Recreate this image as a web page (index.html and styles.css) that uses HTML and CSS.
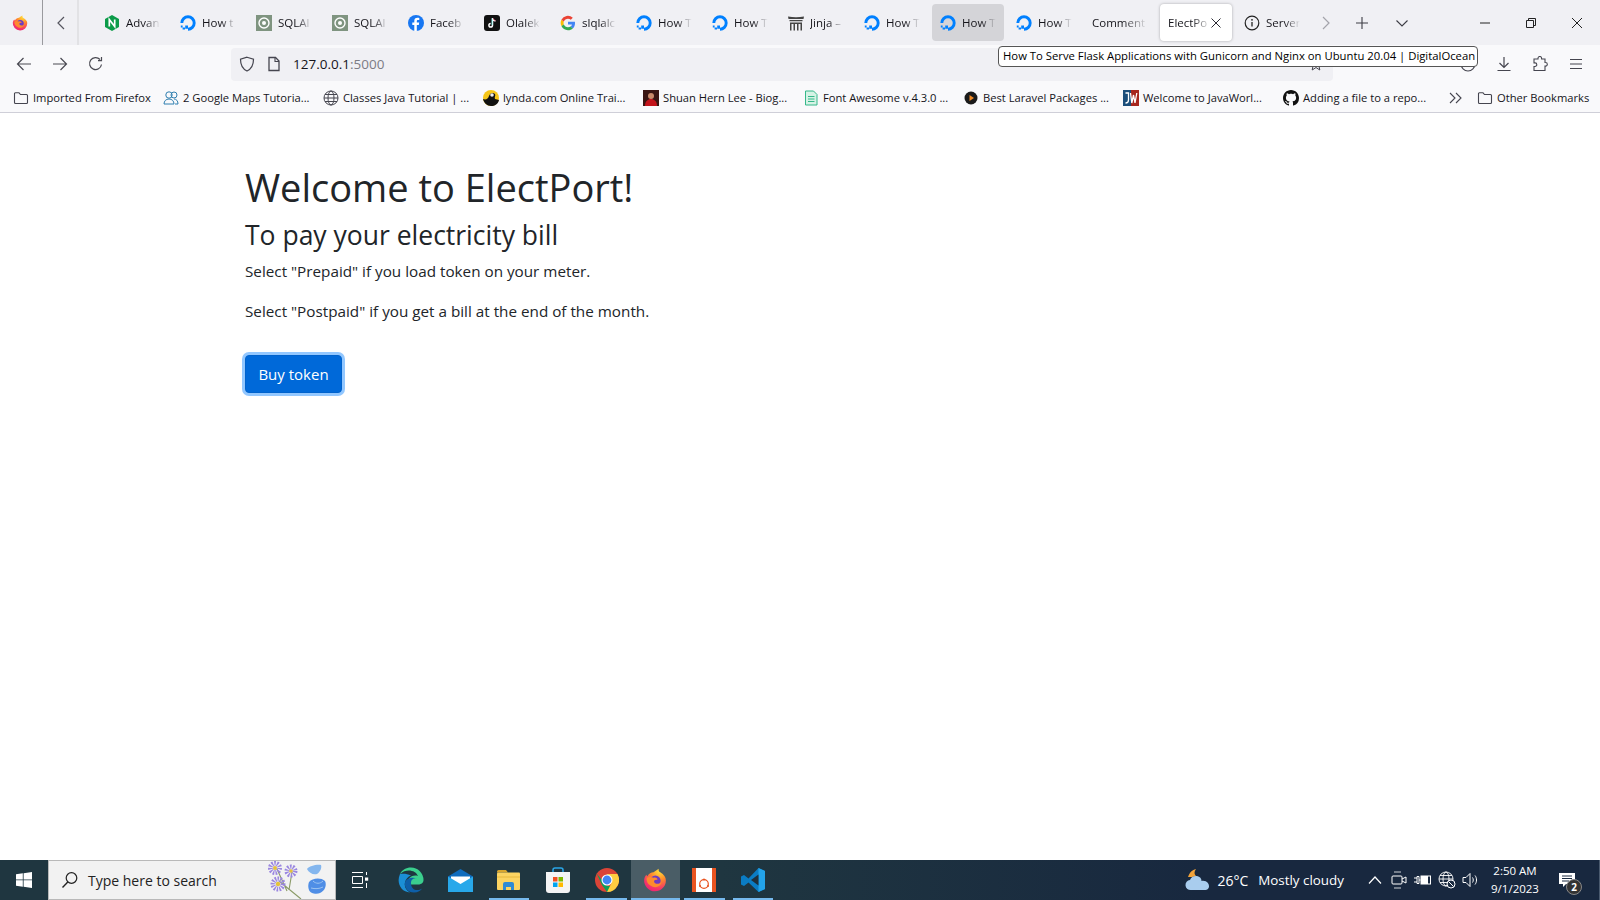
FILE: index.html
```html
<!DOCTYPE html>
<html lang="en">
<head>
    <meta charset="UTF-8">
    <title>ElectPort</title>
    <link rel="stylesheet" href="styles.css">
</head>
<body>
    <svg class="defs" width="0" height="0">
        <defs>
            <symbol id="do" viewBox="0 0 16 16">
                <path d="M8 14.200a6.200 6.200 0 1 0-6.200-6.200" fill="none" stroke="#0080ff" stroke-width="2.900"/>
                <path d="M5.200 10.600H8v3.200H5.200zM2.600 12.400h2.400v2.200H2.600zM.8 10.600h1.800v1.800H.8z" fill="#0080ff"/>
            </symbol>
            <symbol id="sqla" viewBox="0 0 16 16">
                <rect width="16" height="16" fill="#7f9480"/>
                <circle cx="8" cy="8" r="5" fill="none" stroke="#fff" stroke-width="1.400"/>
                <circle cx="8" cy="8" r="2" fill="#fff"/>
            </symbol>
            <symbol id="folder" viewBox="0 0 16 16">
                <path d="M1.500 4V12.500a1 1 0 0 0 1 1h11a1 1 0 0 0 1-1V5.500a1 1 0 0 0-1-1H7.500L6 2.800H2.500a1 1 0 0 0-1 1.200z" fill="none" stroke="#45454f" stroke-width="1.100"/>
            </symbol>
            <radialGradient id="ffg" cx="0.7" cy="0.1" r="1">
                <stop offset="0" stop-color="#ffe03a"/>
                <stop offset="0.4" stop-color="#ff8a2b"/>
                <stop offset="0.8" stop-color="#f5336b"/>
                <stop offset="1" stop-color="#e8246f"/>
            </radialGradient>
            <symbol id="ff" viewBox="0 0 32 32">
                <path d="M16 31A14.600 14.600 0 0 1 1.600 15C2 12.500 3 10.500 4.500 9c.3 1 .8 1.600 1.400 2C7.500 7.500 11 5.500 14 5.500c2.500-1.600 4.400-3 7-4.500-.6 2.300 0 3.600 2 4.800C28 8.500 30.500 12.500 30.500 16.500A14.500 14.500 0 0 1 16 31z" fill="url(#ffg)"/>
                <circle cx="16.500" cy="17" r="7" fill="#6e3bc2"/>
                <path d="M5 13c3-1.500 6-1.500 9 0 3-1 6 1 5 3-3-1-5 1-4 3 2 3 7 3 10-1-1 6-7 9-12 7-5-2-9-6-8-12z" fill="#ff8a2d"/>
            </symbol>
        </defs>
    </svg>

    <div class="browser">
        <div class="tabbar">
            <div class="ff-btn"><svg width="16" height="16"><use href="#ff"/></svg></div>
            <div class="tab-scroll">
                <svg width="12" height="16" viewBox="0 0 12 16"><path d="M9 2 3 8l6 6" fill="none" stroke="#55555f" stroke-width="1.200"/></svg>
            </div>
            <div class="tabs">
                <div class="tab"><svg class="tab-icon" viewBox="0 0 16 16"><path d="M8 0 15 4v8l-7 4-7-4V4z" fill="#0c9b49"/><path d="M5.300 11.500v-7l5.400 7v-7" fill="none" stroke="#fff" stroke-width="1.700"/></svg><span class="tab-title">Advan</span></div>
                <div class="tab"><svg class="tab-icon"><use href="#do"/></svg><span class="tab-title">How t</span></div>
                <div class="tab"><svg class="tab-icon"><use href="#sqla"/></svg><span class="tab-title">SQLAl</span></div>
                <div class="tab"><svg class="tab-icon"><use href="#sqla"/></svg><span class="tab-title">SQLAl</span></div>
                <div class="tab"><svg class="tab-icon" viewBox="0 0 16 16"><circle cx="8" cy="8" r="8" fill="#1877f2"/><path d="M8.800 16V10h2l.4-2.400H8.800V6.300c0-.8.300-1.200 1.300-1.200h1.200V3c-.5-.1-1.200-.2-1.900-.2-2 0-3.100 1.200-3.100 3.200v1.600H4.300V10h2v6z" fill="#fff"/></svg><span class="tab-title">Faceb</span></div>
                <div class="tab"><svg class="tab-icon" viewBox="0 0 16 16"><rect width="16" height="16" rx="3" fill="#111"/><path d="M8.500 3v7.300a1.800 1.800 0 1 1-1.800-1.800M8.500 3c.2 1.700 1.200 2.800 3 3" fill="none" stroke="#fff" stroke-width="1.500"/><path d="M8 3.500v6.500" stroke="#25f4ee" stroke-width=".5"/><path d="M9.300 3.500c.3 1.200 1 2 2.200 2.300" fill="none" stroke="#fe2c55" stroke-width=".6"/></svg><span class="tab-title">Olalek</span></div>
                <div class="tab"><svg class="tab-icon" viewBox="0 0 16 16"><path d="M15 8.200c0-.6 0-1-.1-1.400H8v2.800h4a3.400 3.400 0 0 1-1.500 2.200l2.300 1.800c1.400-1.300 2.200-3.200 2.200-5.400z" fill="#4285f4"/><path d="M8 15.200c2 0 3.600-.6 4.800-1.800l-2.300-1.800c-.6.400-1.500.7-2.500.7-1.900 0-3.600-1.300-4.200-3L1.400 11.100a7.200 7.200 0 0 0 6.600 4.100z" fill="#34a853"/><path d="M3.800 9.300a4.300 4.300 0 0 1 0-2.700L1.400 4.800a7.200 7.200 0 0 0 0 6.300z" fill="#fbbc05"/><path d="M8 3.700c1.100 0 2 .4 2.800 1.100l2-2A7.200 7.200 0 0 0 1.400 4.800l2.400 1.800c.6-1.700 2.300-2.900 4.200-2.900z" fill="#ea4335"/></svg><span class="tab-title">slqlalc</span></div>
                <div class="tab"><svg class="tab-icon"><use href="#do"/></svg><span class="tab-title">How T</span></div>
                <div class="tab"><svg class="tab-icon"><use href="#do"/></svg><span class="tab-title">How T</span></div>
                <div class="tab"><svg class="tab-icon" viewBox="0 0 16 16"><path d="M0 1.500c5 1 11 1 16 0L15.500 4H.5zM1.500 5h13v1.300h-13zM2 7.500h12v8h-1.500V9h-2v6.500H9V9H7v6.500H5.500V9h-2v6.500H2z" fill="#444"/></svg><span class="tab-title">Jinja –</span></div>
                <div class="tab"><svg class="tab-icon"><use href="#do"/></svg><span class="tab-title">How T</span></div>
                <div class="tab tab-hover"><svg class="tab-icon"><use href="#do"/></svg><span class="tab-title">How T</span></div>
                <div class="tab"><svg class="tab-icon"><use href="#do"/></svg><span class="tab-title">How T</span></div>
                <div class="tab"><span class="tab-title tab-noicon">Comment</span></div>
                <div class="tab tab-active">
                    <span class="tab-title tab-noicon">ElectPo</span>
                    <svg class="tab-close" width="10" height="10" viewBox="0 0 10 10"><path d="M.5.5l9 9M9.500.5l-9 9" stroke="#2b2a33" stroke-width="1"/></svg>
                </div>
                <div class="tab"><svg class="tab-icon" viewBox="0 0 16 16"><circle cx="8" cy="8" r="6.800" fill="none" stroke="#222" stroke-width="1.200"/><path d="M8 7v4.500" stroke="#222" stroke-width="1.300"/><circle cx="8" cy="4.800" r=".9" fill="#222"/></svg><span class="tab-title">Server</span></div>
            </div>
            <div class="tab-tools">
                <svg class="tool-next" width="12" height="16" viewBox="0 0 12 16"><path d="M3 2l6 6-6 6" fill="none" stroke="#a4a4ab" stroke-width="1.200"/></svg>
                <svg class="tool-plus" width="14" height="14" viewBox="0 0 14 14"><path d="M7 1v12M1 7h12" stroke="#3c3c44" stroke-width="1.100"/></svg>
                <svg class="tool-down" width="14" height="10" viewBox="0 0 14 10"><path d="M1.500 2.500 7 8l5.500-5.500" fill="none" stroke="#3c3c44" stroke-width="1.100"/></svg>
            </div>
            <div class="win-btns">
                <svg width="12" height="12" viewBox="0 0 12 12"><path d="M1 6h10" stroke="#222" stroke-width="1"/></svg>
                <svg width="12" height="12" viewBox="0 0 12 12"><path d="M1.500 3.500h7v7h-7zM3.500 3.500v-2h7v7h-2" fill="none" stroke="#222" stroke-width="1"/></svg>
                <svg width="12" height="12" viewBox="0 0 12 12"><path d="M1 1l10 10M11 1 1 11" stroke="#222" stroke-width="1"/></svg>
            </div>
        </div>

        <div class="navbar">
            <div class="nav-btns">
                <svg width="16" height="16" viewBox="0 0 16 16"><path d="M15 8H1.500M7.500 2 1.500 8l6 6" fill="none" stroke="#4a4a52" stroke-width="1.200"/></svg>
                <svg width="16" height="16" viewBox="0 0 16 16"><path d="M1 8h13.500M8.500 2l6 6-6 6" fill="none" stroke="#4a4a52" stroke-width="1.200"/></svg>
                <svg width="16" height="16" viewBox="0 0 16 16"><path d="M13.500 8.500A6 6 0 1 1 12 3.500M13.500 1v3.600H10" fill="none" stroke="#4a4a52" stroke-width="1.200"/></svg>
            </div>
            <div class="urlbar">
                <svg class="url-shield" width="16" height="16" viewBox="0 0 16 16"><path d="M8 1.200 14.500 3.300C14.500 9 12.500 13 8 15 3.500 13 1.500 9 1.500 3.300z" fill="none" stroke="#45454f" stroke-width="1.200"/></svg>
                <svg class="url-page" width="14" height="16" viewBox="0 0 14 16"><path d="M2 1.500h6.500L12 5v9.500H2z" fill="none" stroke="#45454f" stroke-width="1.300"/><path d="M8 1.500V5.500h4" fill="none" stroke="#45454f" stroke-width="1.100"/></svg>
                <span class="url-text">127.0.0.1<span class="url-port">:5000</span></span>
                <svg class="url-star" width="14" height="14" viewBox="0 0 14 14"><path d="M7 1l1.800 4H13L9.800 8l1 5L7 10.500 3.200 13l1-5L1 5h4.200z" fill="none" stroke="#45454f"/></svg>
            </div>
            <div class="nav-tools">
                <svg width="16" height="16" viewBox="0 0 16 16"><circle cx="8" cy="8" r="7" fill="none" stroke="#45454f" stroke-width="1.100"/></svg>
                <svg width="16" height="16" viewBox="0 0 16 16"><path d="M8 1v10M3.500 7 8 11.500 12.500 7M1.500 14.500h13" fill="none" stroke="#45454f" stroke-width="1.200"/></svg>
                <svg width="16" height="16" viewBox="0 0 16 16"><path d="M6 3.500V2.800a1.800 1.800 0 0 1 3.600 0v.7H13V7h.5a1.800 1.800 0 0 1 0 3.600H13v4.400H2V11h1a1.800 1.800 0 0 0 0-3.600H2V3.500z" fill="none" stroke="#45454f" stroke-width="1.100" transform="translate(0 -.5)"/></svg>
                <svg width="16" height="16" viewBox="0 0 16 16"><path d="M2 3.500h12M2 8h12M2 12.500h12" stroke="#45454f" stroke-width="1.200"/></svg>
            </div>
        </div>

        <div class="bookmarks">
            <div class="bm bm-first"><svg class="bm-icon"><use href="#folder"/></svg><span>Imported From Firefox</span></div>
            <div class="bm"><svg class="bm-icon" viewBox="0 0 16 16"><circle cx="6" cy="5" r="3.200" fill="none" stroke="#2f7fb0"/><circle cx="11" cy="5" r="3" fill="none" stroke="#2f7fb0"/><path d="M1 14c0-3 2-5 5-5s5 2 5 5zM11 9c2.500 0 4 2 4 5h-3" fill="none" stroke="#2f7fb0"/></svg><span>2 Google Maps Tutoria...</span></div>
            <div class="bm"><svg class="bm-icon" viewBox="0 0 16 16"><g fill="none" stroke="#45454f" stroke-width="1"><circle cx="8" cy="8" r="7"/><ellipse cx="8" cy="8" rx="3" ry="7"/><path d="M1 8h14M2 4.500h12M2 11.500h12"/></g></svg><span>Classes Java Tutorial | ...</span></div>
            <div class="bm"><svg class="bm-icon" viewBox="0 0 16 16"><circle cx="8" cy="8" r="8" fill="#f5c518"/><path d="M0 9c3 1 5 0 6-3 1-3 4-4 6-2 1 2-1 3 0 5l4 1c-1 4-4 6-8 6s-7-3-8-7z" fill="#111"/><circle cx="9" cy="5" r="1.800" fill="#eee"/></svg><span>lynda.com Online Trai...</span></div>
            <div class="bm"><svg class="bm-icon" viewBox="0 0 16 16"><rect width="16" height="16" fill="#3a1512"/><circle cx="8" cy="6" r="3" fill="#c98a6a"/><path d="M2 16c0-5 3-7 6-7s6 2 6 7z" fill="#c3141b"/></svg><span>Shuan Hern Lee - Biog...</span></div>
            <div class="bm"><svg class="bm-icon" viewBox="0 0 16 16"><path d="M2.500 1h8L14 4.500V15H2.500z" fill="#d5f2e5" stroke="#35b88a"/><path d="M5 6.500h6.500M5 9h6.500M5 11.500h6.500" stroke="#35b88a"/></svg><span>Font Awesome v.4.3.0 ...</span></div>
            <div class="bm"><svg class="bm-icon" viewBox="0 0 16 16"><circle cx="8" cy="8" r="6.500" fill="#1a1a1a"/><path d="M6.500 5v6l4.500-3z" fill="#f08a24"/></svg><span>Best Laravel Packages ...</span></div>
            <div class="bm"><svg class="bm-icon" viewBox="0 0 16 16"><rect width="16" height="16" fill="#1b4e7a"/><rect x="8" width="8" height="16" fill="#a7261e"/><path d="M2.500 3h3v7c0 2-1 3-3 3M7.500 3l1.300 10 1.700-8 1.500 8L13.800 3" fill="none" stroke="#fff" stroke-width="1.300"/></svg><span>Welcome to JavaWorl...</span></div>
            <div class="bm"><svg class="bm-icon" viewBox="0 0 16 16"><path d="M8 0C3.580 0 0 3.580 0 8c0 3.540 2.290 6.530 5.470 7.590.4.070.55-.17.550-.38 0-.19-.01-.82-.01-1.490-2.010.37-2.530-.49-2.690-.94-.09-.23-.48-.94-.82-1.130-.28-.15-.68-.52-.01-.53.63-.01 1.080.58 1.230.82.720 1.210 1.870.87 2.330.66.070-.52.280-.87.510-1.070-1.780-.2-3.640-.89-3.640-3.950 0-.87.310-1.590.820-2.150-.08-.2-.36-1.020.080-2.120 0 0 .67-.21 2.200.82.640-.18 1.320-.27 2-.27s1.360.09 2 .27c1.530-1.040 2.200-.82 2.200-.82.440 1.100.16 1.920.08 2.120.51.560.82 1.270.82 2.150 0 3.070-1.870 3.750-3.650 3.950.29.250.54.730.54 1.480 0 1.070-.01 1.930-.01 2.200 0 .21.150.46.550.38A8.010 8.010 0 0 0 16 8c0-4.420-3.580-8-8-8z" fill="#111"/></svg><span>Adding a file to a repo...</span></div>
            <svg class="bm-more" width="14" height="12" viewBox="0 0 14 12"><path d="M1 1l5 5-5 5M7 1l5 5-5 5" fill="none" stroke="#45454f" stroke-width="1.100"/></svg>
            <div class="bm bm-last"><svg class="bm-icon"><use href="#folder"/></svg><span>Other Bookmarks</span></div>
        </div>
    </div>

    <div class="tooltip">How To Serve Flask Applications with Gunicorn and Nginx on Ubuntu 20.04 | DigitalOcean</div>

    <main class="page">
        <h1>Welcome to ElectPort!</h1>
        <h2>To pay your electricity bill</h2>
        <p>Select "Prepaid" if you load token on your meter.</p>
        <p>Select "Postpaid" if you get a bill at the end of the month.</p>
        <button class="btn-primary">Buy token</button>
    </main>

    <footer class="taskbar">
        <div class="start">
            <svg width="16" height="16" viewBox="0 0 16 16"><path d="M0 2.300 6.800 1.300V7.500H0zM7.600 1.200 16 0V7.500H7.600zM0 8.300H6.800V14.700L0 13.700zM7.600 8.300H16V16L7.600 14.800z" fill="#fff"/></svg>
        </div>
        <div class="search">
            <svg width="18" height="18" viewBox="0 0 18 18"><circle cx="10.500" cy="7" r="5.300" fill="none" stroke="#222" stroke-width="1.200"/><path d="M6.800 11 1.500 16.500" stroke="#222" stroke-width="1.400"/></svg>
            <span class="search-text">Type here to search</span>
            <svg class="search-art" width="62" height="38" viewBox="0 0 62 38">
                <path d="M14 20l22 18M12 8l10 22M27 11l-3 18" stroke="#8a9a66" stroke-width="1.100" fill="none"/>
                <g fill="none" stroke="#9a86e0" stroke-width="5" stroke-dasharray="1.400 1.100">
                    <circle cx="10" cy="7" r="4.500"/><circle cx="26" cy="10" r="4"/><circle cx="13" cy="23" r="5"/>
                </g>
                <g fill="#e4c23c"><circle cx="10" cy="7" r="2"/><circle cx="26" cy="10" r="1.800"/><circle cx="13" cy="23" r="2.200"/></g>
                <path d="M42 8c2-3 10-5 14-4 1 3-1 7-4 9-4 1-8-1-10-5z" fill="#84b6ee"/>
                <path d="M44 21c3-4 12-5 16-1 2 4 0 10-5 12-4 2-10 0-11-3-1-3-1-5 0-8z" fill="#4f8ee6"/>
                <path d="M48 20c3 3 7 3 10 0M46 27c4 1 8 1 12-1" stroke="#9cc4f2" stroke-width="1" fill="none"/>
            </svg>
        </div>
        <div class="task-apps">
            <div class="app app-view">
                <svg width="18" height="16" viewBox="0 0 18 16"><path d="M1 .5h11M1 15.500h11M1.500 4.500h10v7h-10z" fill="none" stroke="#fff" stroke-width="1"/><rect x="14" y="5.500" width="3.200" height="3.200" fill="#fff"/><path d="M15.500 0v3M15.500 11v5" stroke="#fff"/></svg>
            </div>
            <div class="app">
                <svg width="26" height="26" viewBox="0 0 26 26"><path d="M13 .5A12.500 12.500 0 0 1 25.500 13c0 3-2.500 4.500-5.500 4.500H9C9.500 10 15 7.500 20 9 18 3 8 1 2 7 4 3 8 .5 13 .5z" fill="#3bcf8e"/><path d="M2 7C-2 16 3 25 12 25.500c-4-2-6-6-5-10 .5-3 3-6 6-7-4-2-8-2-11-1.500z" fill="#1b8fd6"/><path d="M7 15.500c-1 5 3 10 9 10 4 0 7-2 8-4-3 2-7 2-9 0s-2-4-2-6c0-3 3-5 6-4-5-2-11 0-12 4z" fill="#0e5fa8"/></svg>
            </div>
            <div class="app">
                <svg width="25" height="23" viewBox="0 0 25 23"><path d="M12.500 0 25 7.500V23H0V7.500z" fill="#0f6cbd"/><path d="M3 7.500h19v6L12.500 18 3 13.500z" fill="#fff"/><path d="M0 7.500v15.500h25V7.500L12.500 15z" fill="#28a8ea"/></svg>
            </div>
            <div class="app app-open">
                <svg width="23" height="20" viewBox="0 0 23 20"><path d="M0 1.500A1.500 1.500 0 0 1 1.500 0H9l2 2.500H0z" fill="#d9a62e"/><rect y="2.500" width="23" height="17.500" rx="1" fill="#fcd462"/><path d="M0 7h23" stroke="#e8b83c"/><path d="M6 20v-6a2 2 0 0 1 2-2h7a2 2 0 0 1 2 2v6h-3v-3H9v3z" fill="#2f8ad4"/></svg>
            </div>
            <div class="app">
                <svg width="24" height="26" viewBox="0 0 24 26"><path d="M7 6V3a2 2 0 0 1 2-2h6a2 2 0 0 1 2 2v3" fill="none" stroke="#2aa6e8" stroke-width="1.500"/><path d="M0 5h24v18a3 3 0 0 1-3 3H3a3 3 0 0 1-3-3z" fill="#f4f4f4"/><rect x="7" y="10" width="4.500" height="4.500" fill="#f25022"/><rect x="12.500" y="10" width="4.500" height="4.500" fill="#7fba00"/><rect x="7" y="15.500" width="4.500" height="4.500" fill="#00a4ef"/><rect x="12.500" y="15.500" width="4.500" height="4.500" fill="#ffb900"/></svg>
            </div>
            <div class="app app-open">
                <svg width="24" height="24" viewBox="0 0 24 24"><circle cx="12" cy="12" r="12" fill="#db4437"/><path d="M1.600 5.500 7 17l5 7a12 12 0 0 0 10-6H12z" fill="#0f9d58"/><path d="M12 24a12 12 0 0 0 10.400-18H12l4.500 9z" fill="#ffcd40"/><circle cx="12" cy="12" r="5.500" fill="#fff"/><circle cx="12" cy="12" r="4.400" fill="#4285f4"/></svg>
            </div>
            <div class="app app-open app-active">
                <svg width="24" height="24"><use href="#ff"/></svg>
            </div>
            <div class="app app-open">
                <svg width="24" height="24" viewBox="0 0 24 24"><rect width="24" height="24" fill="#fff"/><path d="M0 0h4v24H0zM20 0h4v24h-4z" fill="#e95420"/><circle cx="12" cy="16" r="4.300" fill="none" stroke="#e95420" stroke-width="1.200"/><circle cx="12" cy="11.500" r="1" fill="#e95420"/><circle cx="8" cy="18" r="1" fill="#e95420"/><circle cx="16" cy="18" r="1" fill="#e95420"/></svg>
            </div>
            <div class="app app-open">
                <svg width="24" height="24" viewBox="0 0 24 24"><path d="M17.500 0 24 3v18l-6.500 3-10-9.500-4.500 3.500-3-1.500V8.500L3 7l4.500 3.500z" fill="#0a7cc4"/><path d="M17.500 0 24 3v18l-6.500 3z" fill="#23a3ea"/><path d="M17.500 6.500 10 12l7.500 5.500z" fill="#1f2f3a"/></svg>
            </div>
        </div>
        <div class="tray">
            <svg class="tray-weather" width="25" height="24" viewBox="0 0 25 24"><path d="M11 1c-4 1-6 3-8 8 3 0 5 0 8-1-2-2-2-4 0-7z" fill="#f2a33a"/><path d="M6 22a5 5 0 0 1-1-10c1-3 4-4.500 7-4 3 .5 4.500 2.500 4.500 5 5-1 8 3 7.500 6-.5 2-2 3-3.500 3z" fill="#a9cdee"/></svg>
            <span class="tray-temp">26°C</span>
            <span class="tray-cond">Mostly cloudy</span>
            <div class="tray-icons">
                <svg width="14" height="10" viewBox="0 0 14 10"><path d="M1 8.500 7 2l6 6.500" fill="none" stroke="#fff" stroke-width="1.200"/></svg>
                <svg width="16" height="18" viewBox="0 0 16 18"><path d="M3 1h7M3 17h7" stroke="#fff" stroke-width=".8" fill="none"/><rect x="1" y="5" width="10" height="8" rx="1" fill="none" stroke="#fff"/><path d="M11 8l4-2v6l-4-2" fill="none" stroke="#fff"/></svg>
                <svg width="18" height="12" viewBox="0 0 18 12"><path d="M0 4h3M0 8h3M3 2.500h2v7H3zM5 6h1.500" fill="none" stroke="#fff"/><rect x="7" y="2" width="9.500" height="8" fill="none" stroke="#fff"/><rect x="7" y="2" width="7" height="8" fill="#fff"/></svg>
                <svg width="18" height="18" viewBox="0 0 18 18"><g fill="none" stroke="#fff" stroke-width=".9"><circle cx="8" cy="8" r="7"/><ellipse cx="8" cy="8" rx="3" ry="7"/><path d="M1 8h14M2 4.500h12M2 11.500h12"/></g><circle cx="13" cy="13" r="4" fill="#1a2a40" stroke="#fff"/><path d="M10.500 10.500l5 5" stroke="#fff"/></svg>
                <svg width="18" height="16" viewBox="0 0 18 16"><path d="M1 5.500h3l4-4v13l-4-4H1z" fill="none" stroke="#fff"/><path d="M10.500 5.500c1 1.500 1 3.500 0 5M13 3.500c2 2.500 2 6.500 0 9" fill="none" stroke="#fff"/></svg>
            </div>
            <div class="clock">
                <div>2:50 AM</div>
                <div>9/1/2023</div>
            </div>
            <div class="notif">
                <svg width="17" height="15" viewBox="0 0 17 15"><path d="M0 0h16v11H7l-3 3v-3H0z" fill="#fff"/><path d="M3 3h10M3 5.500h10M3 8h7" stroke="#1a2a40"/></svg>
                <span class="notif-badge">2</span>
            </div>
        </div>
    </footer>
</body>
</html>
```

FILE: styles.css
```css
* {
    box-sizing: border-box;
}

body {
    margin: 0;
    width: 1600px;
    height: 900px;
    overflow: hidden;
    position: relative;
    display: flex;
    flex-direction: column;
    background-color: #fff;
    font-family: "Open Sans", "Noto Sans", sans-serif;
    color: #212529;
}

.defs {
    position: absolute;
}

svg {
    display: block;
    flex-shrink: 0;
}

/* browser chrome */
.browser {
    color: #15141a;
    font-size: 12px;
    flex-shrink: 0;
}

.tabbar {
    display: flex;
    align-items: center;
    height: 45px;
    background-color: #f0f0f4;
}

.ff-btn {
    width: 43px;
    height: 45px;
    padding: 15px 0 0 12px;
    border-right: 1px solid #9a9a9e;
}

.tab-scroll {
    width: 36px;
    height: 45px;
    padding: 15px 0 0 12px;
    border-right: 2px solid #e2e2e5;
}

.tabs {
    display: flex;
    gap: 4px;
    margin-left: 17px;
}

.tab {
    width: 72px;
    height: 37px;
    padding: 0 8px;
    display: flex;
    align-items: center;
    border-radius: 4px;
}

.tab-icon {
    width: 16px;
    height: 16px;
    margin-right: 6px;
}

.tab-title {
    flex: 1;
    white-space: nowrap;
    font-size: 11.500px;
    -webkit-mask-image: linear-gradient(to right, #000 55%, transparent);
    mask-image: linear-gradient(to right, #000 55%, transparent);
}

.tab-hover {
    background-color: #d4d4d8;
}

.tab-active {
    background-color: #fff;
    box-shadow: 0 0 3px rgba(0, 0, 0, 0.3);
}

.tab-close {
    margin-right: 3px;
}

.tab-tools {
    display: flex;
    align-items: center;
    margin-left: 12px;
}

.tool-next {
    margin-right: 23px;
}

.tool-plus {
    margin-right: 26px;
}

.win-btns {
    display: flex;
    margin-left: auto;
    margin-right: 17px;
    gap: 34px;
}

.navbar {
    display: flex;
    align-items: center;
    height: 37px;
    padding: 1px 0 0 16px;
    background-color: #f9f9fb;
}

.nav-btns {
    display: flex;
    gap: 20px;
    width: 215px;
}

.urlbar {
    display: flex;
    align-items: center;
    width: 1102px;
    height: 33px;
    padding-left: 8px;
    border-radius: 4px;
    background-color: #f0f0f4;
}

.url-page {
    margin-left: 12px;
}

.url-text {
    margin-left: 12px;
    font-size: 13.500px;
    color: #15141a;
}

.url-port {
    color: #7c7c84;
}

.url-star {
    margin-left: auto;
    margin-right: 10px;
}

.nav-tools {
    display: flex;
    gap: 20px;
    margin-left: 127px;
}

.bookmarks {
    display: flex;
    align-items: center;
    height: 31px;
    padding: 1px 0 0 13px;
    background-color: #f9f9fb;
    border-bottom: 1px solid #cfcfd8;
}

.bm {
    display: flex;
    align-items: center;
    width: 160px;
    white-space: nowrap;
    font-size: 11.200px;
}

.bm-first {
    width: 150px;
}

.bm-icon {
    width: 16px;
    height: 16px;
    margin-right: 4px;
}

.bm-more {
    margin-left: 6px;
    margin-right: 14px;
}

.bm-last {
    width: auto;
}

.tooltip {
    position: absolute;
    left: 998px;
    top: 46px;
    width: 480px;
    height: 21px;
    padding-left: 4px;
    line-height: 18px;
    font-size: 11.300px;
    color: #000;
    white-space: nowrap;
    background-color: #fff;
    border: 1px solid #555;
    border-radius: 4px;
}

/* page content */
.page {
    flex: 1;
    padding: 50px 0 0 245px;
}

h1 {
    margin: 0 0 7px;
    font-size: 38px;
    font-weight: 400;
    line-height: 48px;
}

h2 {
    margin: 0 0 7px;
    font-size: 26.500px;
    font-weight: 400;
    line-height: 34px;
}

p {
    margin: 0 0 16px;
    font-size: 15.250px;
    line-height: 24px;
}

.btn-primary {
    display: block;
    width: 97px;
    height: 38px;
    margin-top: 32px;
    padding: 0;
    font-family: inherit;
    font-size: 15px;
    color: #fff;
    background-color: #0069d9;
    border: 1px solid #0062cc;
    border-radius: 4px;
    box-shadow: 0 0 0 3px rgba(38, 143, 255, 0.5);
}

/* windows taskbar */
.taskbar {
    display: flex;
    align-items: stretch;
    height: 40px;
    flex-shrink: 0;
    color: #fff;
    background: linear-gradient(to right, #1f3640, #1f3640 45%, #18283f 75%, #18283f);
}

.start {
    width: 48px;
    display: flex;
    align-items: center;
    justify-content: center;
}

.search {
    width: 288px;
    display: flex;
    align-items: center;
    padding-left: 12px;
    background-color: #f2f2f2;
    border: 1px solid #b9b9b9;
    color: #222;
    overflow: hidden;
}

.search-text {
    margin-left: 9px;
    font-size: 14px;
}

.search-art {
    margin-left: auto;
    margin-right: 8px;
}

.task-apps {
    display: flex;
}

.app {
    position: relative;
    width: 48.800px;
    display: flex;
    align-items: center;
    justify-content: center;
}

.app-view {
    width: 48px;
    margin-right: 3px;
}

.app-open::after {
    content: "";
    position: absolute;
    left: 4px;
    right: 4px;
    bottom: 0;
    height: 2px;
    background-color: #76b9ed;
}

.app-active {
    background-color: #4a5d66;
}

.app-active::after {
    left: 0;
    right: 0;
}

.tray {
    display: flex;
    align-items: center;
    margin-left: auto;
    font-size: 13.400px;
}

.tray-temp {
    margin-left: 7px;
    font-size: 14px;
}

.tray-cond {
    margin-left: 10px;
}

.tray-icons {
    display: grid;
    grid-template-columns: repeat(5, 24px);
    justify-items: center;
    align-items: center;
    margin-left: 19px;
}

.clock {
    width: 60px;
    margin-left: 2px;
    text-align: center;
    font-size: 11.500px;
    line-height: 18px;
}

.notif {
    position: relative;
    width: 48px;
    height: 40px;
    margin-left: 7px;
    padding-left: 7px;
    border-right: 1px solid #4a5a6e;
    display: flex;
    align-items: center;
}

.notif-badge {
    position: absolute;
    left: 14px;
    top: 19px;
    width: 16px;
    height: 16px;
    border-radius: 50%;
    font-size: 10px;
    font-weight: 700;
    line-height: 14px;
    text-align: center;
    background-color: #333;
    border: 1px solid #888;
}
```
